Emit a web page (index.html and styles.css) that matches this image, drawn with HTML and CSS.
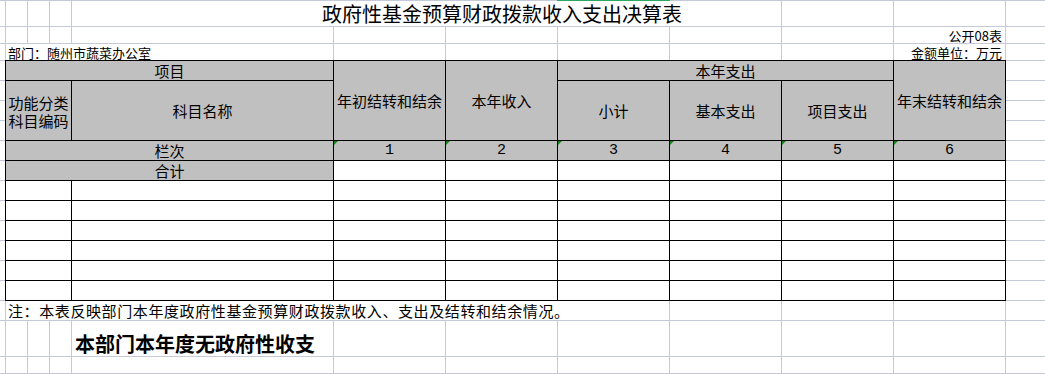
FILE: index.html
```html
<!DOCTYPE html>
<html lang="zh-CN">
<head>
<meta charset="utf-8">
<title>政府性基金预算财政拨款收入支出决算表</title>
<link rel="stylesheet" href="styles.css">
</head>
<body>
<div class="sheet">
  <!-- row: title -->
  <i></i><i></i><i></i><i></i>
  <div class="cell title s5">政府性基金预算财政拨款收入支出决算表</div>
  <i></i><i></i><i></i>
  <!-- row: table no. -->
  <i></i><i></i><i></i><i></i><i></i><i></i><i></i><i></i><i></i><i></i>
  <div class="cell small right">公开08表</div>
  <i></i>
  <!-- row: department / unit -->
  <i></i>
  <div class="cell small s4">部门：随州市蔬菜办公室</div>
  <i></i><i></i><i></i><i></i><i></i>
  <div class="cell small right">金额单位：万元</div>
  <i></i>
  <!-- header row 1 -->
  <i></i>
  <div class="cell hd b s4">项目</div>
  <div class="cell hd b r4">年初结转和结余</div>
  <div class="cell hd b r4">本年收入</div>
  <div class="cell hd b s3">本年支出</div>
  <div class="cell hd b r4">年末结转和结余</div>
  <i></i>
  <!-- header row 2 -->
  <i></i>
  <div class="cell hd b s3 r3 code"><span>功能分类</span><span>科目编码</span></div>
  <div class="cell hd b r3">科目名称</div>
  <div class="cell hd b r3">小计</div>
  <div class="cell hd b r3">基本支出</div>
  <div class="cell hd b r3">项目支出</div>
  <i></i>
  <i></i><i></i>
  <i></i><i></i>
  <!-- column numbers -->
  <i></i>
  <div class="cell hd b s4">栏次</div>
  <div class="cell hd b num">1</div>
  <div class="cell hd b num">2</div>
  <div class="cell hd b num">3</div>
  <div class="cell hd b num">4</div>
  <div class="cell hd b num">5</div>
  <div class="cell hd b num">6</div>
  <i></i>
  <!-- total -->
  <i></i>
  <div class="cell hd b s4">合计</div>
  <div class="cell b"></div><div class="cell b"></div><div class="cell b"></div><div class="cell b"></div><div class="cell b"></div><div class="cell b"></div>
  <i></i>
  <!-- body rows -->
  <i></i><div class="cell b s3"></div><div class="cell b"></div><div class="cell b"></div><div class="cell b"></div><div class="cell b"></div><div class="cell b"></div><div class="cell b"></div><div class="cell b"></div><i></i>
  <i></i><div class="cell b s3"></div><div class="cell b"></div><div class="cell b"></div><div class="cell b"></div><div class="cell b"></div><div class="cell b"></div><div class="cell b"></div><div class="cell b"></div><i></i>
  <i></i><div class="cell b s3"></div><div class="cell b"></div><div class="cell b"></div><div class="cell b"></div><div class="cell b"></div><div class="cell b"></div><div class="cell b"></div><div class="cell b"></div><i></i>
  <i></i><div class="cell b s3"></div><div class="cell b"></div><div class="cell b"></div><div class="cell b"></div><div class="cell b"></div><div class="cell b"></div><div class="cell b"></div><div class="cell b"></div><i></i>
  <i></i><div class="cell b s3"></div><div class="cell b"></div><div class="cell b"></div><div class="cell b"></div><div class="cell b"></div><div class="cell b"></div><div class="cell b"></div><div class="cell b"></div><i></i>
  <i></i><div class="cell b s3"></div><div class="cell b"></div><div class="cell b"></div><div class="cell b"></div><div class="cell b"></div><div class="cell b"></div><div class="cell b"></div><div class="cell b"></div><i></i>
  <!-- note -->
  <i></i>
  <div class="cell foot s7">注：本表反映部门本年度政府性基金预算财政拨款收入、支出及结转和结余情况。</div>
  <i></i><i></i><i></i><i></i>
  <!-- statement -->
  <i></i><i></i><i></i><i></i>
  <div class="cell strong">本部门本年度无政府性收支</div>
  <i></i><i></i><i></i><i></i><i></i><i></i><i></i>
  <!-- empty rows -->
  <i></i><i></i><i></i><i></i><i></i><i></i><i></i><i></i><i></i><i></i><i></i><i></i>
  <i></i><i></i><i></i><i></i><i></i><i></i><i></i><i></i><i></i><i></i><i></i><i></i>
</div>
</body>
</html>
```

FILE: styles.css
```css
html, body {
  margin: 0;
  padding: 0;
  background: #fff;
  overflow: hidden;
}

.sheet {
  position: relative;
  display: grid;
  grid-template-columns: 5px 21px 21px 21px 261px repeat(6, 111px) 1fr;
  grid-template-rows: 25px 16px 16px repeat(13, 19px) 35px 16px 20px;
  gap: 1px;
  padding-top: 1px;
  height: 374px;
  box-sizing: border-box;
  background: #c5cadb;
  font-family: "Noto Sans CJK SC", "Noto Sans", sans-serif;
  font-size: 15px;
  line-height: 1;
  color: #000;
  overflow: hidden;
}

.sheet::before {
  content: "";
  position: absolute;
  top: 0;
  left: 557px;
  width: 113px;
  height: 1px;
  background: #2aa860;
}

.sheet > * {
  display: block;
  background: #fff;
  min-width: 0;
  min-height: 0;
}

.cell {
  display: flex;
  align-items: center;
  white-space: nowrap;
  position: relative;
}

.s3 { grid-column: span 3; }
.s4 { grid-column: span 4; }
.s5 { grid-column: span 5; }
.s7 { grid-column: span 7; }
.r3 { grid-row: span 3; }
.r4 { grid-row: span 4; }

.b {
  box-shadow: 0 0 0 1px #000;
}

.hd {
  background: #c0c0c0;
  justify-content: center;
  text-align: center;
}

.code {
  flex-direction: column;
  gap: 3px;
  padding-top: 2px;
}

.num {
  font-family: "Liberation Mono", "DejaVu Sans Mono", monospace;
  font-size: 15px;
}

.num::before {
  content: "";
  position: absolute;
  top: 0;
  left: 0;
  border-top: 4px solid #118a11;
  border-right: 4px solid transparent;
}

.title {
  font-size: 20px;
  align-items: flex-end;
  padding: 0 0 2px 250px;
}

.small {
  font-size: 13px;
  align-items: flex-end;
  padding: 0 3px 1px 2px;
}

.right {
  justify-content: flex-end;
}

.foot {
  padding-left: 2px;
  letter-spacing: 0.6px;
}

.strong {
  font-size: 20px;
  font-weight: 700;
  align-items: flex-end;
  padding: 0 0 2px 3px;
}
```
